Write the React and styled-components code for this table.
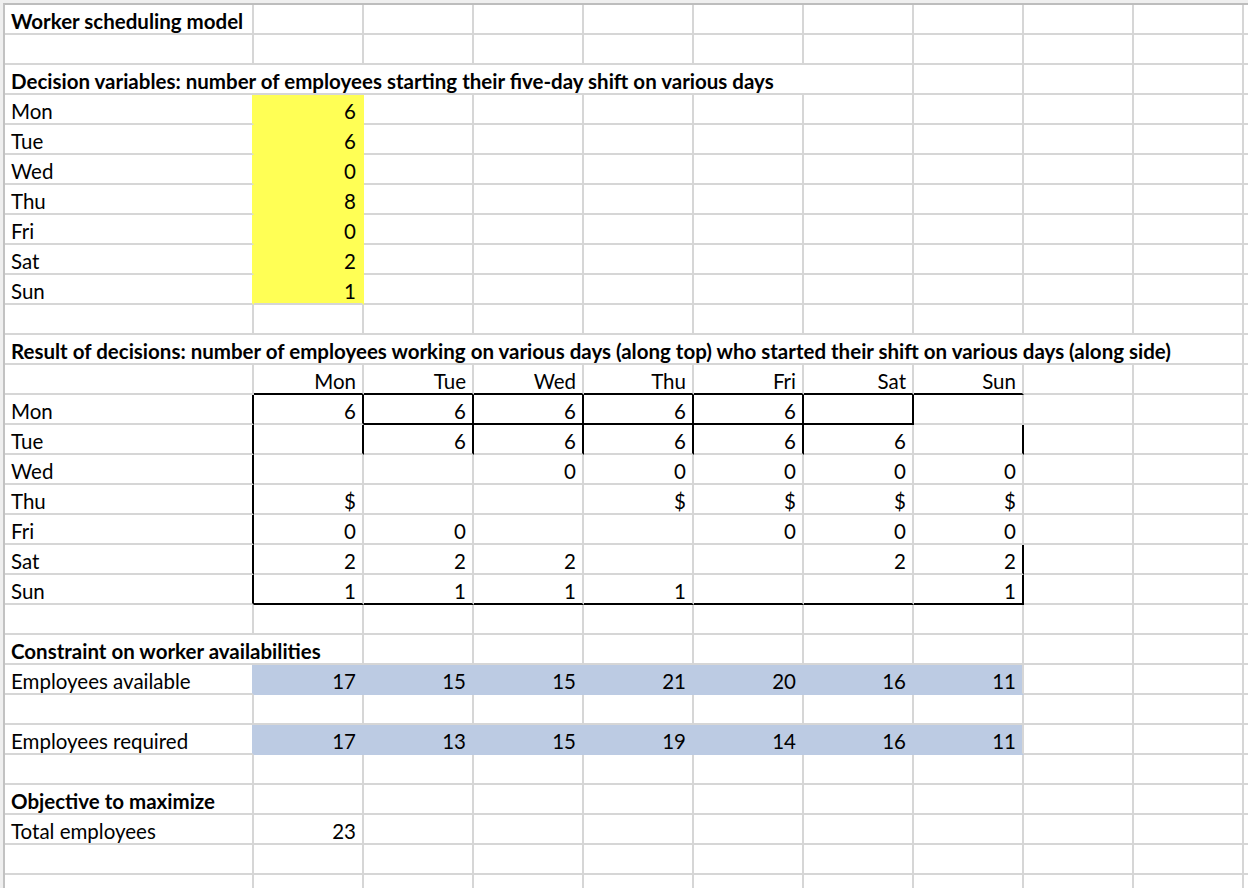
import React from "react";
import styled, { createGlobalStyle } from "styled-components";

const GRID = "#d6d6d6";
const INK = "#000";
const YELLOW = "#ffff55";
const BLUE = "#bccbe3";
const COLS = 11;

const GlobalStyle = createGlobalStyle`
  html, body {
    margin: 0;
    padding: 0;
    background: #efefef;
  }
  body {
    font-family: Lato, "Liberation Sans", sans-serif;
    overflow: hidden;
  }
`;

const Page = styled.div`
  width: 1248px;
  height: 888px;
  overflow: hidden;
  box-sizing: border-box;
  padding: 3px 0 0 3px;
  background: #efefef;
`;

const Sheet = styled.div`
  display: grid;
  grid-template-columns: 249px repeat(${COLS - 1}, 110px);
  grid-auto-rows: 30px;
  width: max-content;
  background: #fff;
  border-top: 2px solid #bdbdbd;
  border-left: 2px solid #c2c2c2;
`;

const Cell = styled.div`
  grid-column: span ${(p) => p.$span || 1};
  display: flex;
  align-items: flex-end;
  justify-content: ${(p) => (p.$num ? "flex-end" : "flex-start")};
  box-sizing: border-box;
  padding: 0 6px 2px 6px;
  border-right: 2px solid ${(p) => p.$r || GRID};
  border-bottom: 2px solid ${(p) => p.$b || GRID};
  background: ${(p) => p.$fill || "transparent"};
  color: #000;
  font-size: 20.5px;
  line-height: 1;
  font-weight: ${(p) => (p.$bold ? 700 : 400)};
  white-space: nowrap;
`;

const DAYS = ["Mon", "Tue", "Wed", "Thu", "Fri", "Sat", "Sun"];

const starting = [6, 6, 0, 8, 0, 2, 1];

// grid of employees working (columns) by start day (rows)
const working = [
  ["6", "6", "6", "6", "6", "", ""],
  ["", "6", "6", "6", "6", "6", ""],
  ["", "", "0", "0", "0", "0", "0"],
  ["$", "", "", "$", "$", "$", "$"],
  ["0", "0", "", "", "0", "0", "0"],
  ["2", "2", "2", "", "", "2", "2"],
  ["1", "1", "1", "1", "", "", "1"],
];

// black box edges in the result block: [row][col] right / bottom
const boxRight = [
  [1, 1, 1, 1, 1, 1, 0],
  [1, 1, 1, 1, 1, 0, 1],
  [0, 0, 0, 0, 0, 0, 0],
  [0, 0, 0, 0, 0, 0, 0],
  [0, 0, 0, 0, 0, 0, 0],
  [0, 0, 0, 0, 0, 0, 1],
  [0, 0, 0, 0, 0, 0, 1],
];
const boxBottom = [
  [0, 1, 1, 1, 1, 1, 0],
  [0, 0, 0, 0, 0, 0, 0],
  [0, 0, 0, 0, 0, 0, 0],
  [0, 0, 0, 0, 0, 0, 0],
  [0, 0, 0, 0, 0, 0, 0],
  [0, 0, 0, 0, 0, 0, 0],
  [1, 1, 1, 1, 1, 1, 1],
];

const available = [17, 15, 15, 21, 20, 16, 11];
const required = [17, 13, 15, 19, 14, 16, 11];

function Blanks({ n }) {
  return Array.from({ length: n }, (_, i) => <Cell key={"b" + i} />);
}

function TitleRow({ children, span = 1 }) {
  return (
    <>
      <Cell $bold $span={span}>{children}</Cell>
      <Blanks n={COLS - span} />
    </>
  );
}

function BandRow({ label, values }) {
  return (
    <>
      <Cell $r={BLUE}>{label}</Cell>
      {values.map((v, i) => (
        <Cell key={i} $num $fill={BLUE} $b={BLUE} $r={i < values.length - 1 ? BLUE : GRID}>
          {v}
        </Cell>
      ))}
      <Blanks n={COLS - 1 - values.length} />
    </>
  );
}

export default function App() {
  return (
    <Page>
      <GlobalStyle />
      <Sheet>
        <TitleRow>Worker scheduling model</TitleRow>
        <Blanks n={COLS} />
        <TitleRow span={7}>
          Decision variables: number of employees starting their five-day shift on various days
        </TitleRow>
        {DAYS.map((d, i) => (
          <React.Fragment key={d}>
            <Cell $r={YELLOW}>{d}</Cell>
            <Cell $num $fill={YELLOW} $r={YELLOW} $b={i < 6 ? YELLOW : GRID}>
              {starting[i]}
            </Cell>
            <Blanks n={COLS - 2} />
          </React.Fragment>
        ))}
        <Blanks n={COLS} />
        <TitleRow span={10}>
          Result of decisions: number of employees working on various days (along top) who started their shift on various days (along side)
        </TitleRow>
        <Cell />
        {DAYS.map((d) => (
          <Cell key={d} $num $b={INK}>{d}</Cell>
        ))}
        <Blanks n={COLS - 8} />
        {DAYS.map((d, r) => (
          <React.Fragment key={d}>
            <Cell $r={INK}>{d}</Cell>
            {working[r].map((v, c) => (
              <Cell
                key={c}
                $num
                $r={boxRight[r][c] ? INK : GRID}
                $b={boxBottom[r][c] ? INK : GRID}
              >
                {v}
              </Cell>
            ))}
            <Blanks n={COLS - 8} />
          </React.Fragment>
        ))}
        <Blanks n={COLS} />
        <TitleRow span={2}>Constraint on worker availabilities</TitleRow>
        <BandRow label="Employees available" values={available} />
        <Blanks n={COLS} />
        <BandRow label="Employees required" values={required} />
        <Blanks n={COLS} />
        <TitleRow>Objective to maximize</TitleRow>
        <Cell>Total employees</Cell>
        <Cell $num>23</Cell>
        <Blanks n={COLS - 2} />
        <Blanks n={COLS} />
        <Blanks n={COLS} />
      </Sheet>
    </Page>
  );
}
